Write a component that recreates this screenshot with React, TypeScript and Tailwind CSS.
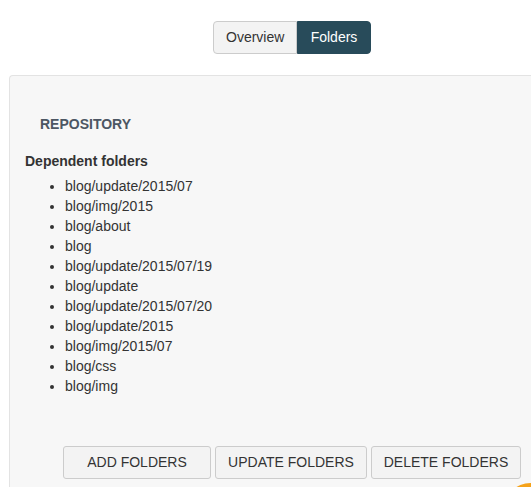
import React, { useState } from 'react';

const folders = [
  'blog/update/2015/07',
  'blog/img/2015',
  'blog/about',
  'blog',
  'blog/update/2015/07/19',
  'blog/update',
  'blog/update/2015/07/20',
  'blog/update/2015',
  'blog/img/2015/07',
  'blog/css',
  'blog/img',
];

export default function App() {
  const [tab, setTab] = useState<'overview' | 'folders'>('folders');

  const tabClass = (active: boolean) =>
    active
      ? 'h-[33px] px-[12px] bg-[#284b5a] border border-[#284b5a] text-white'
      : 'h-[33px] px-[12px] bg-[#f3f3f3] border border-[#cccccc] text-[#333333]';

  return (
    <div className="relative w-[531px] h-[487px] overflow-hidden bg-white text-[14px] text-[#333333] font-['Liberation_Sans',Arial,sans-serif]">
      <div className="flex pt-[21px] pl-[213px]">
        <button
          onClick={() => setTab('overview')}
          className={`${tabClass(tab === 'overview')} w-[84px] rounded-l-[4px]`}
        >
          Overview
        </button>
        <button
          onClick={() => setTab('folders')}
          className={`${tabClass(tab === 'folders')} w-[74px] rounded-r-[4px]`}
        >
          Folders
        </button>
      </div>

      <div className="ml-[9px] mt-[21px] w-[560px] h-[440px] bg-[#f7f7f7] border-l border-t border-[#e3e3e3] rounded-tl-[4px] pl-[15px] pt-[38px]">
        <h4 className="pl-[15px] text-[14px] leading-[20px] font-bold text-[#4c5663]">REPOSITORY</h4>
        <h5 className="mt-[17px] text-[14px] leading-[20px] font-bold text-[#333333]">Dependent folders</h5>
        <ul className="mt-[5px] list-disc pl-[40px] leading-[20px]">
          {folders.map((f) => (
            <li key={f}>{f}</li>
          ))}
        </ul>

        <div className="flex gap-[4px] mt-[50px] pl-[38px]">
          <button className="w-[148px] h-[33px] bg-[#f3f3f3] border border-[#cccccc] rounded-[3px] text-[#333333]">ADD FOLDERS</button>
          <button className="w-[152px] h-[33px] bg-[#f3f3f3] border border-[#cccccc] rounded-[3px] text-[#333333]">UPDATE FOLDERS</button>
          <button className="w-[150px] h-[33px] bg-[#f3f3f3] border border-[#cccccc] rounded-[3px] text-[#333333]">DELETE FOLDERS</button>
        </div>
      </div>

      <div className="absolute left-[504px] top-[483px] w-[53px] h-[53px] rounded-full bg-[#f5a21a]" />
    </div>
  );
}
